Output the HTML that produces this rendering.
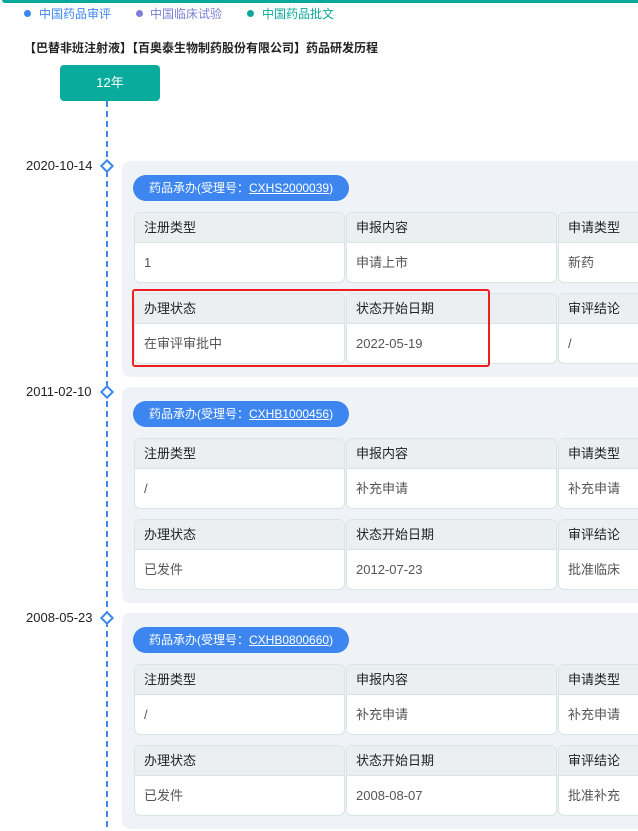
<!DOCTYPE html>
<html><head><meta charset="utf-8"><style>
*{margin:0;padding:0;box-sizing:border-box}
body{width:638px;height:824px;overflow:hidden;background:#fff;font-family:"Liberation Sans","Noto Sans CJK SC",sans-serif;position:relative;color:#333}
.topbar{position:absolute;left:2px;top:0;width:640px;height:3px;background:#0aa89a;border-radius:0 0 0 3px}
.leg{position:absolute;top:6px;font-size:12px;line-height:16px;white-space:nowrap}
.dot{position:absolute;top:10px;width:7px;height:7px;border-radius:50%}
.title{position:absolute;left:24px;top:39px;font-size:12px;font-weight:bold;color:#222;white-space:nowrap}
.yr{position:absolute;left:60px;top:65px;width:100px;height:36px;background:#08ab9c;border-radius:4px;color:#fff;font-size:13px;text-align:center;line-height:36px}
.line{position:absolute;left:106px;top:101px;width:2px;height:730px;background:repeating-linear-gradient(#3d86f0 0 6px,transparent 6px 10px)}
.date{position:absolute;left:26px;font-size:13px;color:#222}
.dia{position:absolute;left:102px;width:10px;height:10px;border:2px solid #3d86f0;background:#fff;transform:rotate(45deg)}
.card{position:absolute;left:122px;width:530px;height:216px;background:#eff3f7;border-radius:8px}
.pill{position:absolute;left:11px;top:14px;height:26px;padding:0 16px;background:#3d86f0;border-radius:13px;color:#fff;font-size:12px;line-height:26px;white-space:nowrap}
.pill u{text-decoration:underline}
.cell{position:absolute;width:211px;height:71px;background:#fff;border:1px solid #d8e6e3;border-radius:6px;overflow:hidden;font-size:13px}
.cell .h{height:30px;background:#ebeff2;border-bottom:1px solid #d8e6e3;line-height:29px;padding-left:9px;color:#222}
.cell .v{line-height:40px;padding-left:9px;color:#555}
.red{position:absolute;left:132px;top:289px;width:358px;height:78px;border:2px solid #f01e1e;border-radius:3px}
</style></head><body>
<div class="topbar"></div>
<div class="dot" style="left:24px;background:#3d86f0"></div><div class="leg" style="left:39px;color:#3d86f0">中国药品审评</div>
<div class="dot" style="left:136px;background:#7b7fd6"></div><div class="leg" style="left:150px;color:#7b7fd6">中国临床试验</div>
<div class="dot" style="left:247px;background:#0aa89a"></div><div class="leg" style="left:262px;color:#0aa89a">中国药品批文</div>
<div class="title">【巴替非班注射液】【百奥泰生物制药股份有限公司】药品研发历程</div>
<div class="yr">12年</div>
<div class="line"></div>

<div class="date" style="top:158px">2020-10-14</div><div class="dia" style="top:161px"></div>
<div class="card" style="top:161px">
<div class="pill">药品承办(受理号：<u>CXHS2000039</u>)</div>
<div class="cell" style="left:12px;top:51px"><div class="h">注册类型</div><div class="v">1</div></div>
<div class="cell" style="left:224px;top:51px"><div class="h">申报内容</div><div class="v">申请上市</div></div>
<div class="cell" style="left:436px;top:51px"><div class="h">申请类型</div><div class="v">新药</div></div>
<div class="cell" style="left:12px;top:132px"><div class="h">办理状态</div><div class="v">在审评审批中</div></div>
<div class="cell" style="left:224px;top:132px"><div class="h">状态开始日期</div><div class="v">2022-05-19</div></div>
<div class="cell" style="left:436px;top:132px"><div class="h">审评结论</div><div class="v">/</div></div>
</div>
<div class="red"></div>

<div class="date" style="top:384px">2011-02-10</div><div class="dia" style="top:387px"></div>
<div class="card" style="top:387px">
<div class="pill">药品承办(受理号：<u>CXHB1000456</u>)</div>
<div class="cell" style="left:12px;top:51px"><div class="h">注册类型</div><div class="v">/</div></div>
<div class="cell" style="left:224px;top:51px"><div class="h">申报内容</div><div class="v">补充申请</div></div>
<div class="cell" style="left:436px;top:51px"><div class="h">申请类型</div><div class="v">补充申请</div></div>
<div class="cell" style="left:12px;top:132px"><div class="h">办理状态</div><div class="v">已发件</div></div>
<div class="cell" style="left:224px;top:132px"><div class="h">状态开始日期</div><div class="v">2012-07-23</div></div>
<div class="cell" style="left:436px;top:132px"><div class="h">审评结论</div><div class="v">批准临床</div></div>
</div>

<div class="date" style="top:610px">2008-05-23</div><div class="dia" style="top:613px"></div>
<div class="card" style="top:613px">
<div class="pill">药品承办(受理号：<u>CXHB0800660</u>)</div>
<div class="cell" style="left:12px;top:51px"><div class="h">注册类型</div><div class="v">/</div></div>
<div class="cell" style="left:224px;top:51px"><div class="h">申报内容</div><div class="v">补充申请</div></div>
<div class="cell" style="left:436px;top:51px"><div class="h">申请类型</div><div class="v">补充申请</div></div>
<div class="cell" style="left:12px;top:132px"><div class="h">办理状态</div><div class="v">已发件</div></div>
<div class="cell" style="left:224px;top:132px"><div class="h">状态开始日期</div><div class="v">2008-08-07</div></div>
<div class="cell" style="left:436px;top:132px"><div class="h">审评结论</div><div class="v">批准补充</div></div>
</div>
</body></html>
